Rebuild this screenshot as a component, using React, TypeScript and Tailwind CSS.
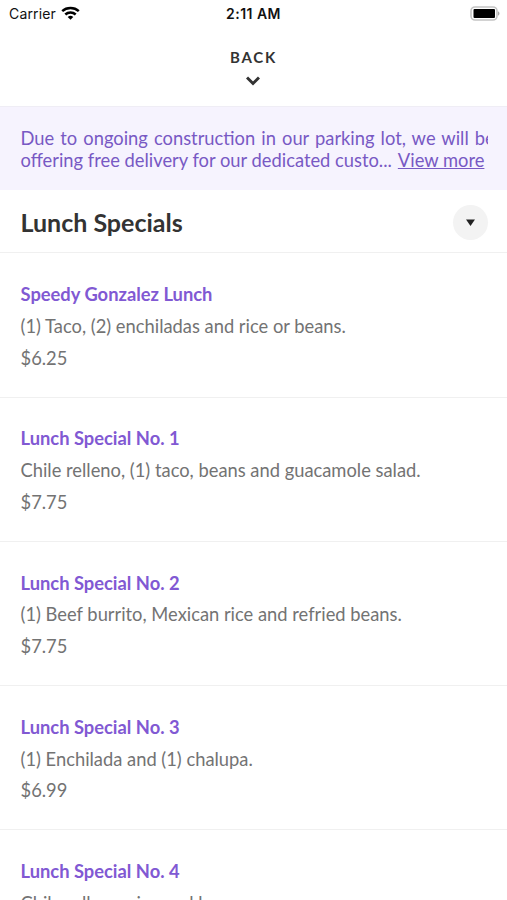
interface MenuItem {
  name: string;
  description: string;
  price: string;
}

const items: MenuItem[] = [
  { name: "Speedy Gonzalez Lunch", description: "(1) Taco, (2) enchiladas and rice or beans.", price: "$6.25" },
  { name: "Lunch Special No. 1", description: "Chile relleno, (1) taco, beans and guacamole salad.", price: "$7.75" },
  { name: "Lunch Special No. 2", description: "(1) Beef burrito, Mexican rice and refried beans.", price: "$7.75" },
  { name: "Lunch Special No. 3", description: "(1) Enchilada and (1) chalupa.", price: "$6.99" },
  { name: "Lunch Special No. 4", description: "Chile relleno, rice and beans.", price: "$7.50" },
];

function StatusBar() {
  return (
    <div className="grid h-7 shrink-0 grid-cols-3 items-center pr-[7px] pl-[9px] font-['Inter',sans-serif] text-[14px] leading-none text-[#111]">
      <div className="flex items-center gap-[5px]">
        <span className="tracking-[0.15px]">Carrier</span>
        <svg className="-mt-[2px]" width="19" height="14" viewBox="0 0 19 14" fill="none" stroke="black" strokeWidth="2.5">
          <path d="M1.2 5.2c4.6-4.2 12-4.2 16.6 0" />
          <path d="M4.3 8.5c3-2.8 7.4-2.8 10.4 0" />
          <path d="M6.7 11a4 4 0 0 1 5.6 0l-2.8 2.8z" fill="black" stroke="none" />
        </svg>
      </div>
      <span className="-ml-[2px] text-center font-semibold tracking-[0.45px]">2:11 AM</span>
      <svg className="-mt-[2px] justify-self-end" width="30" height="15" viewBox="0 0 30 15">
        <rect x="1" y="1" width="26" height="13" rx="4" fill="white" stroke="#c4c4c4" strokeWidth="1.6" />
        <rect x="3.5" y="3" width="21.5" height="9" rx="1" fill="black" />
        <path d="M28 5.3c2 .8 2 3.6 0 4.4z" fill="#aaa" />
      </svg>
    </div>
  );
}

function MenuRow({ item }: { item: MenuItem }) {
  return (
    <li className="flex h-[144.2px] shrink-0 flex-col border-b border-[#f0f0f0] px-[20.5px] pt-[25.7px] text-[18.33px] leading-[31.8px] text-[#737373]">
      <h2 className="font-bold text-[#8159d3]">{item.name}</h2>
      <p>{item.description}</p>
      <p>{item.price}</p>
    </li>
  );
}

export default function App() {
  return (
    <main className="flex h-[900px] w-[507px] flex-col overflow-hidden bg-white font-['Lato',sans-serif]">
      <StatusBar />
      <button className="flex h-[78px] shrink-0 flex-col items-center pt-[19px] text-[#333]">
        <span className="text-[15px] leading-[20px] font-bold tracking-[1.7px]">BACK</span>
        <svg className="mt-[9px] -ml-px" width="14" height="10" viewBox="0 0 14 10" fill="none" stroke="currentColor" strokeWidth="3">
          <path d="M1 1.5l6 6 6-6" />
        </svg>
      </button>

      {/* Notice */}
      <div className="h-[84px] shrink-0 border-t border-[#efedf5] bg-[#f6f3fe] pt-[20px] pr-[19px] pl-[20.5px] text-[18.33px] leading-[22px] text-[#7859c4]">
        <p className="overflow-hidden whitespace-nowrap [word-spacing:1.4px]">
          Due to ongoing construction in our parking lot, we will be
        </p>
        <p className="flex whitespace-nowrap">
          <span>offering free delivery for our dedicated custo...</span>
          <a className="ml-[6px] underline">View more</a>
        </p>
      </div>

      <header className="flex h-[63px] shrink-0 items-center justify-between border-b border-[#f0f0f0] pr-[19px] pl-[20.5px]">
        <h1 className="pt-[4px] text-[25px] font-bold text-[#333]">Lunch Specials</h1>
        <button className="mt-[2px] flex size-[35px] items-center justify-center rounded-full bg-[#f3f3f3]">
          <svg width="9" height="7" viewBox="0 0 9 7" fill="#222">
            <path d="M0 .5h9L4.5 7z" />
          </svg>
        </button>
      </header>

      <ul className="flex flex-col pt-[0.5px]">
        {items.map((item) => (
          <MenuRow key={item.name} item={item} />
        ))}
      </ul>
    </main>
  );
}
